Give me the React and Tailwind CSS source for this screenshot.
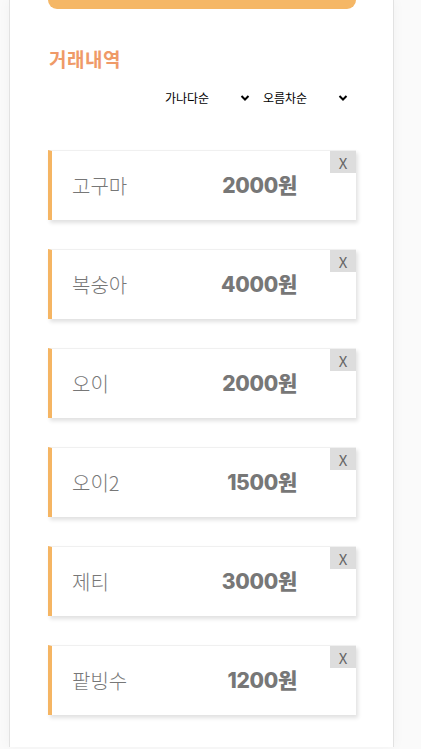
import { useState } from "react";

// Transaction history list
const initialItems = [
  { id: 1, name: "고구마", price: 2000 },
  { id: 2, name: "복숭아", price: 4000 },
  { id: 3, name: "오이", price: 2000 },
  { id: 4, name: "오이2", price: 1500 },
  { id: 5, name: "제티", price: 3000 },
  { id: 6, name: "팥빙수", price: 1200 },
];

const Chevron = () => (
  <svg width="10" height="10" viewBox="0 0 10 10">
    <path d="M1.5 3 L5 6.5 L8.5 3" fill="none" stroke="black" strokeWidth="2" />
  </svg>
);

const ItemCard = ({ item, onRemove }) => (
  <div className="relative flex h-[70px] w-[308px] items-center justify-between border-t border-t-[#f0f0f0] border-l-4 border-l-[#f5b563] bg-white pl-5 pr-[59px] shadow-[2px_3px_4px_rgba(0,0,0,0.12)]">
    <span className="text-[20px] font-light text-[#777]">{item.name}</span>
    <span className="font-['Inter','Noto_Sans_CJK_KR',sans-serif] text-[21px] font-extrabold tracking-[-0.3px] text-[#777]">
      {item.price}원
    </span>
    <button
      onClick={() => onRemove(item.id)}
      className="absolute right-0 top-0 flex h-[22px] w-[26px] items-center justify-center bg-[#dddddd] text-[15px] leading-none text-[#666]"
    >
      X
    </button>
  </div>
);

const App = () => {
  const [items, setItems] = useState(initialItems);

  const removeItem = (id) => {
    setItems(items.filter((item) => item.id !== id));
  };

  return (
    <div className="min-h-[749px] bg-[#fafafa] font-['Noto_Sans_CJK_KR','Noto_Sans',sans-serif]">
      <div className="ml-[9px] h-[747px] w-[385px] border-x border-[#e2e2e2] bg-white pl-[38px] shadow-[0_0_12px_rgba(0,0,0,0.04)]">
        <div className="h-[9px] w-[308px] rounded-b-[10px] bg-[#f5b766]" />

        <h2 className="mt-[37px] pl-[1px] text-[19px] font-bold leading-[26px] tracking-[0.5px] text-[#ef9a68]">
          거래내역
        </h2>

        <div className="mt-[17px] flex w-[308px] justify-end gap-[6px] pr-[5px] text-[12px] text-black">
          <div className="flex w-[92px] items-center justify-between pl-[4px] pr-[3px]">
            <span>가나다순</span>
            <Chevron />
          </div>
          <div className="flex w-[92px] items-center justify-between pl-[4px] pr-[3px]">
            <span>오름차순</span>
            <Chevron />
          </div>
        </div>

        <div className="mt-[43px] flex flex-col gap-[29px]">
          {items.map((item) => (
            <ItemCard key={item.id} item={item} onRemove={removeItem} />
          ))}
        </div>
      </div>
    </div>
  );
};

export default App;
